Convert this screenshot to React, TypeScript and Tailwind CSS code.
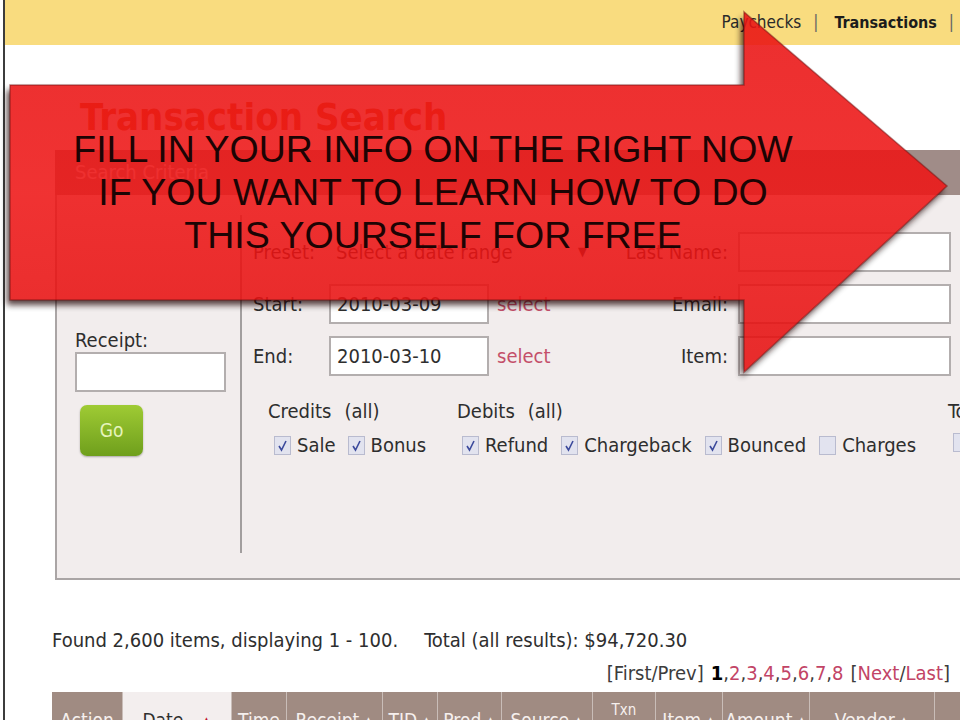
import React from "react";

const Box = ({ checked, label }: { checked: boolean; label: string }) => (
  <span className="flex items-center">
    <span className="w-[17px] h-[19px] border border-[#b9bbcf] bg-[#e2e3ef] flex items-center justify-center">
      {checked && (
        <svg width="11" height="13" viewBox="0 0 11 13">
          <path d="M2 7 L4.5 11 L9 2" fill="none" stroke="#3c4a9c" strokeWidth="1.6" />
        </svg>
      )}
    </span>
    <span className="ml-[6px]">{label}</span>
  </span>
);

const Field = ({ value, className }: { value?: string; className: string }) => (
  <div className={`h-[40px] shrink-0 bg-white border-2 border-[#b3aeae] pl-[6px] flex items-center ${className}`}>
    {value}
  </div>
);

const cols = [
  { w: "w-[71px]", label: "Action" },
  { w: "w-[109px]", label: "Date", active: true },
  { w: "w-[55px]", label: "Time" },
  { w: "w-[96px]", label: "Receipt", arrow: true },
  { w: "w-[55px]", label: "TID", arrow: true },
  { w: "w-[64px]", label: "Prod", arrow: true },
  { w: "w-[91px]", label: "Source", arrow: true },
  { w: "w-[63px]", label: "Txn Type", two: true },
  { w: "w-[67px]", label: "Item", arrow: true },
  { w: "w-[87px]", label: "Amount", arrow: true },
  { w: "w-[125px]", label: "Vendor", arrow: true },
  { w: "w-[60px]", label: "" },
];

export default function App() {
  return (
    <div
      className="relative w-[960px] h-[720px] overflow-hidden bg-white text-[20px] text-[#2e2e2e]"
      style={{ fontFamily: '"DejaVu Sans Condensed", "Liberation Sans", sans-serif' }}
    >
      <div className="ml-[3px] h-full border-l-2 border-[#3c3c3c]">
        {/* top bar */}
        <div className="h-[45px] bg-[#f9dc7f] flex items-center justify-end pr-[6px] text-[17px] text-[#2a2a2a]">
          <span>Paychecks</span>
          <span className="ml-[12px] mr-[16px] text-[#666]">|</span>
          <span className="font-bold text-[16px] text-[#1c1c1c]">Transactions</span>
          <span className="ml-[12px] text-[#666]">|</span>
        </div>

        <div className="pl-[47px]">
          <h1 className="mt-[48px] pl-[28px] text-[38px] leading-[48px] font-bold text-[#d85a1c]">
            Transaction Search
          </h1>

          <div className="mt-[9px] ml-[3px] w-[920px]">
            <div className="h-[45px] bg-[#a08c88] pl-[20px] leading-[45px] text-[#f4eeee]">Search Criteria</div>
            <div className="flex h-[385px] bg-[#f2eded] border-l-2 border-b-2 border-[#aaa5a5]">
              {/* left column */}
              <div className="w-[183px] shrink-0 pt-[133px] pl-[18px]">
                <div className="leading-[24px]">Receipt:</div>
                <Field className="w-[151px]" />
                <button className="mt-[13px] ml-[5px] w-[63px] h-[51px] rounded-[7px] bg-gradient-to-b from-[#9fcb34] to-[#6f9f1c] text-[#e6f4bd] text-[19px] shadow-[0_1px_2px_rgba(0,0,0,0.3)]">
                  Go
                </button>
              </div>
              <div className="w-[2px] shrink-0 bg-[#a29e9e] mt-[20px] mb-[25px]" />

              {/* right section */}
              <div className="flex-1 min-w-0 pt-[37px] pl-[11px] pr-[24px]">
                <div className="flex flex-col gap-[12px]">
                  <div className="flex items-center h-[40px]">
                    <span className="w-[76px] shrink-0">Preset:</span>
                    <span className="ml-[7px] w-[257px] shrink-0 flex items-center justify-between pr-[6px]">
                      <span>Select a date range</span>
                      <span className="text-[13px]">▼</span>
                    </span>
                    <span className="flex-1 text-right whitespace-nowrap">Last Name:</span>
                    <Field className="ml-[10px] w-[213px]" />
                  </div>
                  <div className="flex items-center h-[40px]">
                    <span className="w-[76px] shrink-0">Start:</span>
                    <Field className="w-[160px]" value="2010-03-09" />
                    <span className="ml-[8px] text-[#c4506a]">select</span>
                    <span className="flex-1 text-right">Email:</span>
                    <Field className="ml-[10px] w-[213px]" />
                  </div>
                  <div className="flex items-center h-[40px]">
                    <span className="w-[76px] shrink-0">End:</span>
                    <Field className="w-[160px]" value="2010-03-10" />
                    <span className="ml-[8px] text-[#c4506a]">select</span>
                    <span className="flex-1 text-right">Item:</span>
                    <Field className="ml-[10px] w-[213px]" />
                  </div>
                </div>

                <div className="mt-[23px] pl-[15px] flex leading-[24px]">
                  <div className="w-[189px] shrink-0">
                    <div>
                      Credits<span className="ml-[13px]">(all)</span>
                    </div>
                    <div className="mt-[10px] pl-[6px] flex gap-[12px]">
                      <Box checked label="Sale" />
                      <Box checked label="Bonus" />
                    </div>
                  </div>
                  <div className="w-[491px] shrink-0">
                    <div>
                      Debits<span className="ml-[13px]">(all)</span>
                    </div>
                    <div className="mt-[10px] pl-[5px] flex gap-[13px]">
                      <Box checked label="Refund" />
                      <Box checked label="Chargeback" />
                      <Box checked label="Bounced" />
                      <Box checked={false} label="Charges" />
                    </div>
                  </div>
                  <div className="w-[60px] shrink-0">
                    <div>To</div>
                    <div className="mt-[10px] pl-[5px] flex">
                      <Box checked={false} label="" />
                    </div>
                  </div>
                </div>
              </div>
            </div>
          </div>

          {/* results */}
          <div className="mt-[48px] leading-[24px] flex">
            <span>Found 2,600 items, displaying 1 - 100.</span>
            <span className="ml-[26px]">Total (all results): $94,720.30</span>
          </div>
          <div className="mt-[9px] leading-[24px] flex justify-end pr-[10px] text-[#3c3c3c]">
            <span>[First/Prev]</span>
            <span className="ml-[7px]">
              <b className="text-black">1</b>
              {["2", "3", "4", "5", "6", "7", "8"].map((n) => (
                <span key={n}>
                  ,<span className="text-[#c24466]">{n}</span>
                </span>
              ))}
            </span>
            <span className="ml-[7px]">
              [<span className="text-[#c24466]">Next</span>/<span className="text-[#c24466]">Last</span>]
            </span>
          </div>

          {/* table header */}
          <div className="mt-[7px] flex h-[56px] bg-[#a08b82] text-[#f6f0ee] text-[19px]">
            {cols.map((c, i) => (
              <div
                key={i}
                className={`${c.w} shrink-0 flex items-center justify-center border-r border-[#c9bdb8] ${
                  c.active ? "bg-[#f3eeee] text-[#2e2e2e]" : ""
                }`}
              >
                {c.two ? (
                  <span className="text-[15px] leading-[19px] text-center">
                    Txn
                    <br />
                    Type
                  </span>
                ) : (
                  <span>
                    {c.label}
                    {c.active && <span className="ml-[18px] text-[#c0102e] text-[15px]">▲</span>}
                    {c.arrow && <span className="ml-[4px] text-[15px]">▲</span>}
                  </span>
                )}
              </div>
            ))}
          </div>
        </div>
      </div>

      {/* promotional arrow overlay */}
      <svg className="absolute inset-0 pointer-events-none" width="960" height="720" viewBox="0 0 960 720">
        <defs>
          <mask id="outside">
            <rect width="960" height="720" fill="white" />
            <polygon points="10,85 744,85 744,12 947,186 744,372 744,300 10,300" fill="black" />
          </mask>
          <filter id="blur" x="-10%" y="-10%" width="120%" height="120%">
            <feGaussianBlur stdDeviation="3" />
          </filter>
          <linearGradient id="redfill" x1="0" y1="0" x2="0" y2="1">
            <stop offset="0" stopColor="#e91212" />
            <stop offset="0.5" stopColor="#ee1616" />
            <stop offset="1" stopColor="#e40e0e" />
          </linearGradient>
        </defs>
        <g mask="url(#outside)">
          <polygon
            points="7,90 741,90 741,17 944,191 741,377 741,305 7,305"
            fill="#1a0000"
            opacity="0.75"
            filter="url(#blur)"
          />
        </g>
        <polygon
          points="10,85 744,85 744,12 947,186 744,372 744,300 10,300"
          fill="url(#redfill)"
          fillOpacity="0.88"
          stroke="#701010"
          strokeOpacity="0.5"
          strokeWidth="1.5"
        />
      </svg>
      <div
        className="absolute left-0 top-[128px] w-[866px] text-center text-[37.5px] leading-[43px] text-[#1c0404] pointer-events-none"
        style={{ fontFamily: '"Liberation Sans", Arial, sans-serif' }}
      >
        FILL IN YOUR INFO ON THE RIGHT NOW
        <br />
        IF YOU WANT TO LEARN HOW TO DO
        <br />
        THIS YOURSELF FOR FREE
      </div>
    </div>
  );
}
